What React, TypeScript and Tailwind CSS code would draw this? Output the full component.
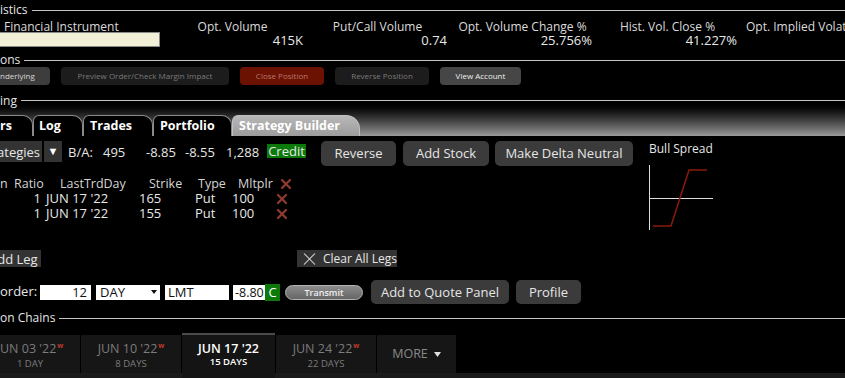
import React from "react";
import { X } from "lucide-react";

function Sec({ label, cls }: { label: string; cls: string }) {
  return (
    <div className={"flex items-center " + cls}>
      <span className="whitespace-nowrap text-[12px] leading-none text-[#e4e4e4]">{label}</span>
      <div className="ml-[4px] h-px flex-1 bg-[#c4c4c4]" />
    </div>
  );
}

function Del() {
  return <X size={16} strokeWidth={3.5} color="#8c3b2f" />;
}

function LegRow({ strike }: { strike: string }) {
  return (
    <div className="flex h-[15px] whitespace-nowrap text-[13px] leading-[15px] text-[#e8e8e8]">
      <div className="w-[41px] text-right">1</div>
      <div className="ml-[5px] w-[93px]">JUN 17 '22</div>
      <div className="w-[56px]">{strike}</div>
      <div className="w-[37px]">Put</div>
      <div className="w-[42px]">100</div>
      <div className="flex h-[15px] items-center">
        <Del />
      </div>
    </div>
  );
}

function DateTab({ date, days, w, active, cls }: { date: string; days: string; w?: boolean; active?: boolean; cls: string }) {
  return (
    <div className={"flex flex-col items-center pt-[6px] " + cls}>
      <div
        className={
          "whitespace-nowrap text-[12.5px] leading-[16px] " +
          (active ? "font-semibold text-white" : "text-[#7c7c7c]")
        }
      >
        {date}
        {w ? <span className="relative -top-[5px] ml-[1px] text-[7px] font-bold text-[#c0392b]">w</span> : null}
      </div>
      <div className={"whitespace-nowrap text-[9.5px] leading-[10px] " + (active ? "font-semibold text-white" : "text-[#7c7c7c]")}>
        {days}
      </div>
    </div>
  );
}

export default function App() {
  return (
    <div className="h-[378px] w-[845px] overflow-hidden bg-black font-['Open_Sans',sans-serif] text-[#e6e6e6]">
      {/* Statistics */}
      <Sec label="istics" cls="h-[20px]" />
      <div className="grid h-[13px] w-[905px] grid-cols-[160px_145px_145px_145px_145px_145px] whitespace-nowrap text-[12px] leading-[13px] text-[#dcdcdc]">
        <div className="pl-[4px]">Financial Instrument</div>
        <div className="text-center">Opt. Volume</div>
        <div className="text-center">Put/Call Volume</div>
        <div className="text-center">Opt. Volume Change %</div>
        <div className="text-center">Hist. Vol. Close %</div>
        <div className="text-center">Opt. Implied Volatility %</div>
      </div>
      <div className="grid h-[15px] w-[905px] grid-cols-[160px_145px_145px_145px_145px_145px] whitespace-nowrap text-[13px] leading-[15px] text-[#e8e8e8]">
        <div className="-mt-[1px] h-[15px] border border-l-0 border-[#8a8a8a] bg-[#f2efd7]" />
        <div className="pr-[2px] text-right">415K</div>
        <div className="pr-[3px] text-right">0.74</div>
        <div className="pr-[3px] text-right">25.756%</div>
        <div className="pr-[3px] text-right">41.227%</div>
        <div />
      </div>

      {/* Actions */}
      <Sec label="ons" cls="mt-[5px] h-[14px]" />
      <div className="flex h-[18px] whitespace-nowrap text-[8px] leading-[18px]">
        <div className="-ml-[21px] w-[71px] rounded-[4px] bg-[#3d3d3d] text-center text-[#d8d8d8]">Underlying</div>
        <div className="ml-[11px] w-[168px] rounded-[4px] bg-[#1c1c1c] text-center text-[#7a7a7a]">
          Preview Order/Check Margin Impact
        </div>
        <div className="ml-[11px] w-[84px] rounded-[4px] bg-[#6c1203] text-center text-[#b8766a]">Close Position</div>
        <div className="ml-[11px] w-[94px] rounded-[4px] bg-[#1c1c1c] text-center text-[#7a7a7a]">Reverse Position</div>
        <div className="ml-[11px] w-[81px] rounded-[4px] bg-[#464646] text-center text-[#eeeeee]">View Account</div>
      </div>

      {/* Trading tabs */}
      <div className="mt-[8px] h-[43px] bg-linear-to-b from-black from-[20%] to-[#9a9a9a]">
        <Sec label="ing" cls="h-[15px]" />
        <div className="mt-[7px] flex h-[21px] whitespace-nowrap text-[12.5px] font-bold leading-[19px] text-white">
          <div className="w-[33px] rounded-tr-[10px] border-t border-r border-[#8a8a8a] bg-black">rs</div>
          <div className="w-[50px] rounded-tl-[6px] rounded-tr-[10px] border-t border-r border-l border-[#8a8a8a] bg-black pl-[5px]">Log</div>
          <div className="w-[70px] rounded-tl-[6px] rounded-tr-[10px] border-t border-r border-l border-[#8a8a8a] bg-black pl-[6px]">Trades</div>
          <div className="w-[79px] rounded-tl-[6px] rounded-tr-[10px] border-t border-r border-l border-[#8a8a8a] bg-black pl-[6px]">Portfolio</div>
          <div className="w-[128px] rounded-tl-[6px] rounded-tr-[14px] border-t border-r border-l border-[#c0c0c0] bg-linear-to-b from-[#b8b8b8] to-[#9c9c9c] pl-[6px] text-white">
            Strategy Builder
          </div>
        </div>
      </div>

      {/* Strategy builder body */}
      <div className="mt-[5px] flex">
        <div className="w-[645px]">
          <div className="flex h-[25px] items-start whitespace-nowrap text-[13px] text-[#e6e6e6]">
            <div className="-ml-[22px] h-[21px] w-[64px] bg-[#333333] pl-[2px] leading-[22px]">Strategies</div>
            <div className="ml-[2px] flex h-[21px] w-[18px] items-center justify-center bg-[#333333] text-[11px] text-white">▼</div>
            <div className="ml-[6px] w-[35px] leading-[22px]">B/A:</div>
            <div className="w-[43px] leading-[22px]">495</div>
            <div className="w-[39px] leading-[22px]">-8.85</div>
            <div className="w-[41px] leading-[22px]">-8.55</div>
            <div className="w-[41px] leading-[22px]">1,288</div>
            <div className="mt-[3px] h-[14px] w-[39px] bg-[#0b7a0b] text-center leading-[15px] text-[#e8e8e8]">Credit</div>
            <div className="ml-[15px] h-[25px] w-[75px] rounded-[5px] bg-[#3b3b3b] text-center leading-[25px]">Reverse</div>
            <div className="ml-[7px] h-[25px] w-[86px] rounded-[5px] bg-[#3b3b3b] text-center leading-[25px]">Add Stock</div>
            <div className="ml-[6px] h-[25px] w-[138px] rounded-[5px] bg-[#3b3b3b] text-center leading-[25px]">Make Delta Neutral</div>
          </div>

          <div className="mt-[10px]">
            <div className="flex h-[15px] whitespace-nowrap text-[12.5px] leading-[16px] text-[#d4d4d4]">
              <div className="w-[14px]">n</div>
              <div className="w-[46px]">Ratio</div>
              <div className="w-[89px]">LastTrdDay</div>
              <div className="w-[49px]">Strike</div>
              <div className="w-[40px]">Type</div>
              <div className="w-[40px]">Mltplr</div>
              <div className="flex h-[15px] items-center">
                <Del />
              </div>
            </div>
            <LegRow strike="165" />
            <LegRow strike="155" />
          </div>

          <div className="mt-[29px] flex h-[17px] whitespace-nowrap text-[13px] leading-[18px] text-[#e6e6e6]">
            <div className="-ml-[15px] w-[56px] bg-[#333333] pl-[4px]">Add Leg</div>
            <div className="ml-[256px] flex w-[100px] items-center gap-[3px] bg-[#333333] pl-[2px] text-[12px]">
              <X size={22} strokeWidth={1.2} color="#dddddd" />
              <span>Clear All Legs</span>
            </div>
          </div>

          <div className="mt-[13px] flex h-[24px] items-center whitespace-nowrap text-[13px] text-[#e6e6e6]">
            <div className="w-[40px]">order:</div>
            <div className="h-[15px] w-[51px] bg-white pr-[4px] text-right leading-[15px] text-[#111]">12</div>
            <div className="ml-[5px] flex h-[15px] w-[64px] items-center justify-between bg-white pl-[4px] pr-[3px] leading-[15px] text-[#111]">
              <span>DAY</span>
              <svg width="6" height="4" viewBox="0 0 6 4">
                <path d="M0 0H6L3 4Z" fill="#111" />
              </svg>
            </div>
            <div className="ml-[5px] h-[15px] w-[64px] bg-white pl-[3px] leading-[15px] text-[#111]">LMT</div>
            <div className="ml-[4px] h-[15px] w-[32px] overflow-hidden bg-white pl-[2px] text-[12.5px] leading-[15px] text-[#111]">-8.80</div>
            <div className="h-[17px] w-[15px] bg-[#0b7a0b] text-center leading-[17px] text-white">C</div>
            <div className="ml-[5px] h-[15px] w-[78px] rounded-full border border-[#b4b4b4] bg-linear-to-b from-[#8c8c8c] to-[#666666] text-center text-[9px] font-semibold leading-[13px] text-[#f0f0f0]">
              Transmit
            </div>
            <div className="ml-[8px] h-[24px] w-[138px] rounded-[5px] bg-[#3b3b3b] text-center leading-[24px]">Add to Quote Panel</div>
            <div className="ml-[7px] h-[24px] w-[65px] rounded-[5px] bg-[#3b3b3b] text-center leading-[24px]">Profile</div>
          </div>
        </div>

        <div>
          <div className="h-[16px] pl-[4px] text-[12px] leading-[16px] text-[#e6e6e6]">Bull Spread</div>
          <svg className="mt-[6px]" width="72" height="70" viewBox="0 0 72 70">
            <line x1="4.5" y1="2" x2="4.5" y2="67" stroke="#dddddd" strokeWidth="1" />
            <line x1="4" y1="35.5" x2="68" y2="35.5" stroke="#dddddd" strokeWidth="1" />
            <polyline points="8,63 26,63 44,7 62,7" fill="none" stroke="#8b1a0a" strokeWidth="1.5" />
          </svg>
        </div>
      </div>

      {/* Option chains */}
      <Sec label="on Chains" cls="mt-[7px] h-[14px]" />
      <div className="mt-[8px] flex h-[45px] flex-col">
        <div className="flex h-[40px] items-end gap-[1px]">
          <DateTab date="JUN 03 '22" days="1 DAY" w cls="-ml-[20px] h-[38px] w-[100px] bg-[#161616]" />
          <DateTab date="JUN 10 '22" days="8 DAYS" w cls="h-[38px] w-[100px] bg-[#161616]" />
          <DateTab
            date="JUN 17 '22"
            days="15 DAYS"
            active
            cls="relative z-10 -mb-[5px] h-[45px] w-[93px] border-t-2 border-[#4a4a4a] bg-[#141414]"
          />
          <DateTab date="JUN 24 '22" days="22 DAYS" w cls="h-[38px] w-[100px] bg-[#161616]" />
          <div className="flex h-[38px] w-[79px] items-center justify-center gap-[6px] bg-[#161616] text-[12.5px] text-[#8a8a8a]">
            <span>MORE</span>
            <svg width="7" height="5" viewBox="0 0 7 5">
              <path d="M0 0H7L3.5 5Z" fill="#e0e0e0" />
            </svg>
          </div>
        </div>
        <div className="h-[5px] bg-[#1a1a1a]" />
      </div>
    </div>
  );
}
